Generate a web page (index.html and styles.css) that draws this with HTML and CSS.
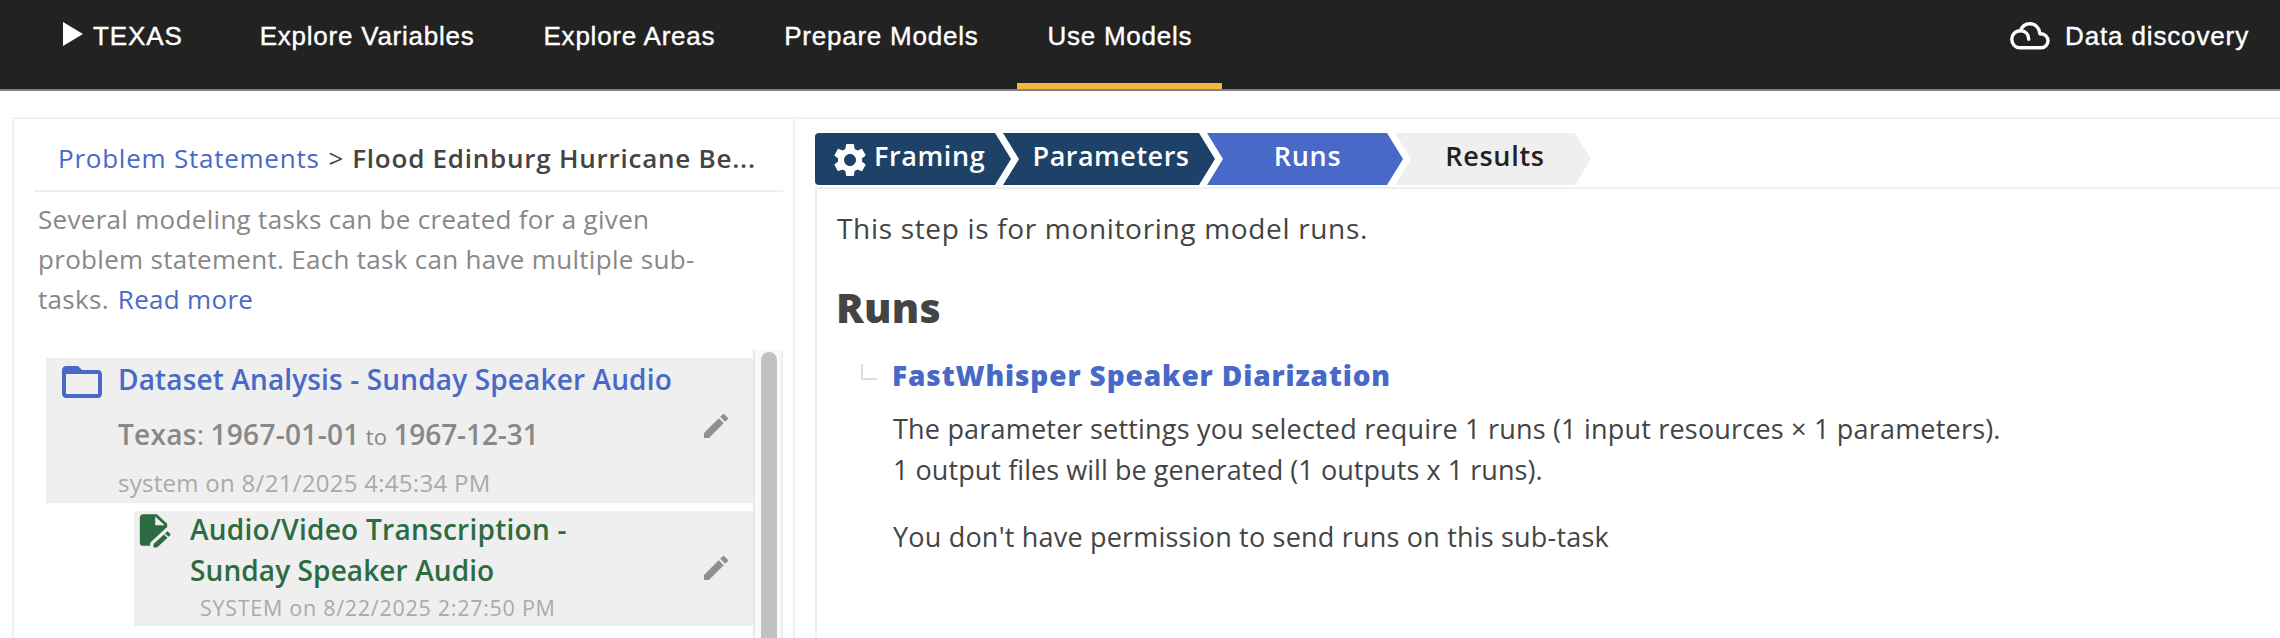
FILE: index.html
```html
<!DOCTYPE html>
<html lang="en">
<head>
<meta charset="utf-8">
<title>Use Models</title>
<link rel="stylesheet" href="styles.css">
</head>
<body>
<header class="topbar">
  <nav class="nav">
    <a class="nav-item region"><svg class="caret" viewBox="0 0 20 24"><path d="M0 0L20 12L0 24Z"/></svg><span>TEXAS</span></a>
    <a class="nav-item">Explore Variables</a>
    <a class="nav-item">Explore Areas</a>
    <a class="nav-item">Prepare Models</a>
    <a class="nav-item active">Use Models</a>
  </nav>
  <a class="discovery">
    <svg class="cloud" viewBox="0 0 40 28"><path d="M10 25.800H31A7 7 0 0 0 31 11.800H30C29.500 6 25.500 1.800 20 1.800C15.500 1.800 12 4.500 10.500 8.800C5.200 8.800 1.800 12.600 1.800 17.300S5.200 25.800 10 25.800Z M10.500 8.800C15.500 8.800 18.700 12 18.700 17.300"/></svg>
    <span>Data discovery</span>
  </a>
</header>
<main class="workspace">
  <aside class="sidebar">
    <div class="crumbs"><a class="link">Problem Statements</a><span class="sep">&gt;</span><span class="current">Flood Edinburg Hurricane Be...</span></div>
    <p class="intro">Several modeling tasks can be created for a given<br>problem statement. Each task can have multiple sub-<br>tasks. <a class="link more">Read more</a></p>
    <div class="task-scroller">
      <div class="task-list">
        <article class="task">
          <svg class="folder" viewBox="0 0 24 24"><path d="M20 6h-8l-2-2H4c-1.100 0-1.990.9-1.990 2L2 18c0 1.100.9 2 2 2h16c1.100 0 2-.9 2-2V8c0-1.100-.9-2-2-2zm0 12H4V8h16v10z"/></svg>
          <div class="task-body">
            <div class="task-name">Dataset Analysis - Sunday Speaker Audio</div>
            <div class="task-range"><b>Texas</b><span class="colon">:</span> <b>1967-01-01</b> <small>to</small> <b class="range-end">1967-12-31</b></div>
            <div class="task-meta">system on 8/21/2025 4:45:34 PM</div>
          </div>
          <svg class="pencil" viewBox="0 0 24 24"><path d="M3 17.250V21h3.750L17.810 9.940l-3.750-3.750L3 17.250zM20.710 7.040c.390-.390.390-1.020 0-1.410l-2.340-2.340c-.390-.390-1.020-.390-1.410 0l-1.830 1.830 3.750 3.750 1.830-1.830z"/></svg>
        </article>
        <article class="task subtask">
          <svg class="file" viewBox="0 0 24 24" preserveAspectRatio="none"><path d="M6 2C4.890 2 4 2.890 4 4V20A2 2 0 0 0 6 22H10V20.090L20 10.090V8L14 2H6M13 3.500L18.500 9H13V3.500M20.150 13C20 13 19.860 13.050 19.750 13.160L18.730 14.180L20.820 16.260L21.840 15.250C22.050 15.030 22.050 14.670 21.840 14.460L20.540 13.160C20.430 13.050 20.290 13 20.150 13M18.140 14.770L12 20.920V23H14.080L20.230 16.850L18.140 14.770Z"/></svg>
          <div class="task-body">
            <div class="task-name">Audio/Video Transcription -<br><span class="line-two">Sunday Speaker Audio</span></div>
            <div class="task-meta">SYSTEM on 8/22/2025 2:27:50 PM</div>
          </div>
          <svg class="pencil" viewBox="0 0 24 24"><path d="M3 17.250V21h3.750L17.810 9.940l-3.750-3.750L3 17.250zM20.710 7.040c.390-.390.390-1.020 0-1.410l-2.340-2.340c-.390-.390-1.020-.390-1.410 0l-1.830 1.830 3.750 3.750 1.830-1.830z"/></svg>
        </article>
      </div>
      <div class="track"><div class="thumb"></div></div>
    </div>
  </aside>
  <section class="detail">
    <div class="steps">
      <div class="step done first"><svg class="gear" viewBox="0 0 24 24"><path d="M19.140 12.940c.040-.300.060-.610.060-.940 0-.320-.020-.640-.070-.940l2.030-1.580c.180-.140.230-.410.120-.610l-1.920-3.320c-.120-.220-.370-.290-.590-.220l-2.390.960c-.500-.380-1.030-.700-1.620-.940l-.360-2.540c-.040-.240-.240-.410-.480-.410h-3.840c-.240 0-.430.170-.470.410l-.360 2.540c-.590.240-1.130.570-1.620.940l-2.390-.960c-.220-.080-.470 0-.590.220L2.740 8.870c-.120.210-.080.470.120.610l2.030 1.580c-.050.300-.090.630-.090.940s.020.640.070.940l-2.030 1.580c-.180.140-.230.410-.120.610l1.920 3.320c.120.220.370.290.590.220l2.390-.960c.500.380 1.030.700 1.620.940l.360 2.540c.050.240.240.410.480.410h3.840c.240 0 .440-.170.470-.410l.360-2.540c.590-.240 1.130-.560 1.620-.940l2.390.960c.220.080.470 0 .590-.220l1.920-3.320c.120-.220.070-.470-.120-.610l-2.010-1.580zM12 15.600c-1.980 0-3.600-1.620-3.600-3.600s1.620-3.600 3.600-3.600 3.600 1.620 3.600 3.600-1.620 3.600-3.600 3.600z"/></svg><span>Framing</span></div>
      <div class="step done wide">Parameters</div>
      <div class="step current-step">Runs</div>
      <div class="step todo">Results</div>
    </div>
    <div class="panel">
      <p class="lead">This step is for monitoring model runs.</p>
      <h2 class="heading">Runs</h2>
      <div class="run">
        <span class="elbow"></span>
        <div class="run-body">
          <h3 class="run-name">FastWhisper Speaker Diarization</h3>
          <p class="run-info">The parameter settings you selected require 1 runs (1 input resources × 1 parameters).<br><span class="outputs">1 output files will be generated (1 outputs x 1 runs).</span></p>
          <p class="run-info notice">You don't have permission to send runs on this sub-task</p>
        </div>
      </div>
    </div>
  </section>
</main>
</body>
</html>
```
FILE: styles.css
```css
* { box-sizing: border-box; }
body { margin: 0; height: 638px; overflow: hidden; display: flex; flex-direction: column; background: #fff; color: #444; font: 26px/40px "Open Sans", sans-serif; white-space: nowrap; }
p, h2, h3 { margin: 0; }
svg { flex: none; display: block; }

.topbar { display: flex; justify-content: space-between; flex: none; height: 91px; background: #222; border-bottom: 2px solid #838080; color: #fff; font: 26px/72px "Liberation Sans", Arial, sans-serif; letter-spacing: 0.86px; -webkit-text-stroke: 0.4px #fff; }
.nav { display: flex; gap: 9px; padding-left: 33px; letter-spacing: 0.76px; }
.nav-item { height: 89px; padding: 0 30px; }
.region { display: flex; gap: 10px; margin-right: 8px; letter-spacing: 0.9px; }
.caret { width: 20px; height: 24px; margin-top: 22px; fill: #fff; }
.active { border-bottom: 6px solid #f4b740; }
.discovery { display: flex; gap: 15px; padding-right: 31px; }
.cloud { width: 40px; height: 28px; margin-top: 22px; fill: none; stroke: #fff; stroke-width: 3.4; stroke-linecap: round; stroke-linejoin: round; }

.workspace { display: flex; flex: 1; min-height: 0; margin-top: 26px; border-top: 2px solid #efefef; margin-left: 12px; }
.link { color: #4869c8; }
.sidebar { display: flex; flex-direction: column; width: 783px; flex: none; border-left: 2px solid #efefef; border-right: 2px solid #efefef; padding: 0 10px 0 20px; }
.crumbs { display: flex; height: 73px; flex: none; padding: 19px 0 0 24px; border-bottom: 2px solid #efefef; letter-spacing: 0.76px; }
.sep { margin: 0 8px 0 9px; }
.current { font-weight: 600; }
.intro { flex: none; padding: 7px 0 0 4px; color: #888; letter-spacing: 0.3px; }
.more { margin-left: 2px; }
.task-scroller { display: flex; flex: 1; min-height: 0; margin-top: 31px; overflow: hidden; }
.task-list { flex: 1; padding: 8px 0 0 12px; }
.task { display: flex; height: 145px; padding-left: 12px; padding-right: 21px; background: #efefef; }
.folder { width: 48px; height: 48px; fill: #4869c8; }
.task-body { flex: 1; padding: 1px 0 0 12px; }
.task-name { font-size: 28px; font-weight: 600; letter-spacing: 0.14px; color: #4869c8; }
.task-range { margin-top: 15px; font-size: 28px; letter-spacing: 0.3px; color: #888; }
.task-range b { font-weight: 600; }
.task-range small { font-size: 22px; }
.task-range, .task-range small { word-spacing: -1.5px; }
.task-range .range-end { letter-spacing: -0.1px; }
.task-meta { margin-top: 12px; font-size: 24px; line-height: 30px; letter-spacing: 0.28px; color: #aaa; }
.pencil { width: 32px; height: 32px; margin-top: 52px; fill: #909090; }
.subtask { height: 115px; margin: 8px 0 0 88px; padding-left: 0; }
.file { width: 41px; height: 38px; margin-left: -1px; fill: #2d6c42; }
.subtask .task-body { padding-left: 16px; }
.subtask .task-name { margin-top: -3px; line-height: 41px; letter-spacing: 0.27px; color: #2d6c42; }
.subtask .line-two { letter-spacing: 0.1px; }
.subtask .task-meta { margin-top: 3px; padding-left: 10px; font-size: 21.5px; line-height: 28px; letter-spacing: 0.72px; }
.subtask .pencil { margin-top: 41px; }
.track { width: 30px; border-left: 2px solid #e8e8e8; border-right: 2px solid #ededed; background: #fafafa; padding: 2px 4px 0 6px; }
.thumb { width: 16px; height: 400px; border-radius: 8px; background: #c1c1c1; }

.detail { flex: 1; min-width: 0; padding: 14px 0 0 20px; display: flex; flex-direction: column; }
.steps { display: flex; flex: none; height: 52px; }
.step { display: flex; justify-content: center; width: 196px; line-height: 46px; font-size: 27px; font-weight: 600; letter-spacing: 0.7px; color: #fff; margin-left: -8px; clip-path: polygon(0 0, 180px 0, 100% 50%, 180px 100%, 0 100%, 16px 50%); }
.first { justify-content: flex-start; margin-left: 0; padding-left: 15px; gap: 4px; border-radius: 4px 0 0 4px; letter-spacing: 0.6px; clip-path: polygon(0 0, 180px 0, 100% 50%, 180px 100%, 0 100%); }
.wide { width: 212px; margin-left: -8px; padding-left: 4px; letter-spacing: 0.5px; clip-path: polygon(0 0, 196px 0, 100% 50%, 196px 100%, 0 100%, 16px 50%); }
.gear { width: 40px; height: 40px; margin-top: 7px; fill: #fff; }
.done { background: #1d4167; }
.current-step { background: #4869c8; padding-left: 5px; }
.todo { background: #efefef; color: #222; padding-left: 4px; }
.panel { flex: 1; margin-top: 2px; padding: 19px 0 0 20px; border-left: 2px solid #efefef; border-top: 2px solid #efefef; }
.lead { font-size: 28px; letter-spacing: 0.67px; }
.heading { margin-top: 34px; font-size: 41px; line-height: 50px; font-weight: 800; letter-spacing: 0.3px; margin-left: -1px; }
.run { display: flex; gap: 15px; margin: 23px 0 0 24px; }
.elbow { width: 16px; height: 16px; margin-top: 9px; border-left: 2px solid #ddd; border-bottom: 2px solid #ddd; }
.run-name { font-size: 28px; font-weight: 800; letter-spacing: 0.88px; color: #4869c8; }
.run-info { margin-top: 13px; padding-left: 1px; font-size: 27px; line-height: 41px; letter-spacing: 0.2px; }
.outputs { letter-spacing: 0.06px; }
.notice { margin-top: 26px; }
```
